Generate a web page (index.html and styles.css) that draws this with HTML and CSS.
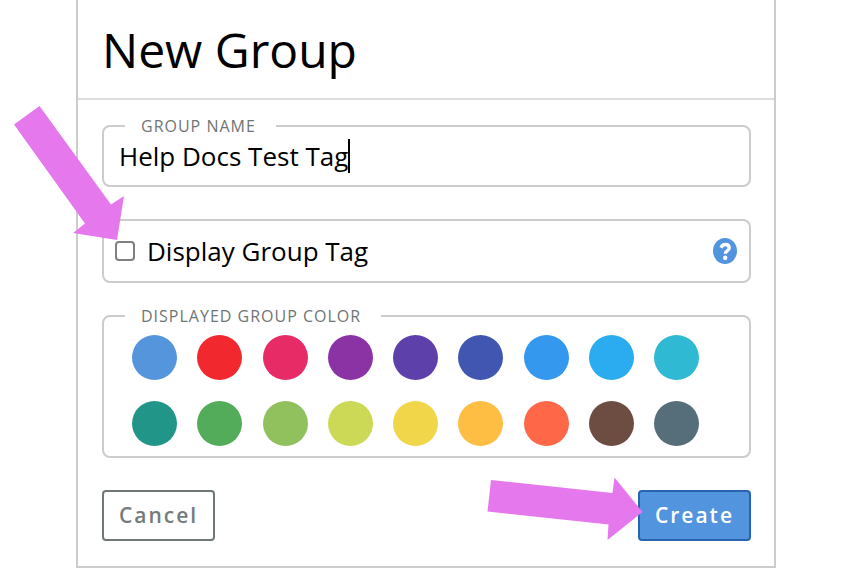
FILE: index.html
```html
<!DOCTYPE html>
<html lang="en">
<head>
<meta charset="utf-8">
<title>New Group</title>
<link rel="stylesheet" href="styles.css">
</head>
<body>
<main class="dialog">
  <header class="dialog-header"><h1>New Group</h1></header>
  <form class="dialog-body">
    <fieldset class="field">
      <legend><label for="group-name">Group Name</label></legend>
      <div class="name-row">
        <input class="name-input" id="group-name" type="text" value="Help Docs Test Tag"><span class="caret"></span>
      </div>
    </fieldset>
    <div class="field tag-row">
      <input class="check" id="display-tag" type="checkbox">
      <label class="tag-label" for="display-tag">Display Group Tag</label>
      <button class="help" type="button" aria-label="Help">
        <svg width="24" height="26" viewBox="0 0 24 26" aria-hidden="true">
          <ellipse cx="12" cy="13" rx="12" ry="13" fill="#5294de"/>
          <path d="M8 9.700Q9.500 6.500 12.200 6.500C14.600 6.500 16.200 7.900 16.200 10C16.200 13.100 12.300 12.800 12.300 15.800" fill="none" stroke="#fff" stroke-width="3.400"/>
          <ellipse cx="12.200" cy="19.800" rx="2.200" ry="2.400" fill="#fff"/>
        </svg>
      </button>
    </div>
    <fieldset class="field">
      <legend>Displayed Group Color</legend>
      <div class="swatches">
        <input class="swatch blue" type="radio" name="color" aria-label="Blue">
        <input class="swatch red" type="radio" name="color" aria-label="Red">
        <input class="swatch pink" type="radio" name="color" aria-label="Pink">
        <input class="swatch purple" type="radio" name="color" aria-label="Purple">
        <input class="swatch violet" type="radio" name="color" aria-label="Violet">
        <input class="swatch indigo" type="radio" name="color" aria-label="Indigo">
        <input class="swatch azure" type="radio" name="color" aria-label="Azure">
        <input class="swatch sky" type="radio" name="color" aria-label="Sky">
        <input class="swatch cyan" type="radio" name="color" aria-label="Cyan">
        <input class="swatch teal" type="radio" name="color" aria-label="Teal">
        <input class="swatch green" type="radio" name="color" aria-label="Green">
        <input class="swatch olive" type="radio" name="color" aria-label="Light green">
        <input class="swatch lime" type="radio" name="color" aria-label="Lime">
        <input class="swatch yellow" type="radio" name="color" aria-label="Yellow">
        <input class="swatch amber" type="radio" name="color" aria-label="Amber">
        <input class="swatch orange" type="radio" name="color" aria-label="Orange">
        <input class="swatch brown" type="radio" name="color" aria-label="Brown">
        <input class="swatch slate" type="radio" name="color" aria-label="Slate">
      </div>
    </fieldset>
    <div class="actions">
      <button class="button cancel" type="button">Cancel</button>
      <button class="button create" type="button">Create</button>
    </div>
  </form>
</main>
<svg class="arrows" width="844" height="574" viewBox="0 0 844 574" aria-hidden="true">
  <path d="M39.500 106L14 124.500L85 223.500L73 233L117 240L124 196L111 204.500Z"/>
  <path d="M491 480L487.500 511.500L608.500 524.500L607.500 540L642.500 512L614.500 477.500L612.500 493Z"/>
</svg>
</body>
</html>
```

FILE: styles.css
```css
* { box-sizing: border-box; }

body {
  margin: 0;
  background: #fff;
  color: #000;
  font-family: "Open Sans", "Noto Sans", sans-serif;
}

.dialog {
  margin: 0 68px 0 76px;
  border: 2px solid #ccc;
  border-top: 0;
}

.dialog-header {
  padding: 18px 24px 16px;
  border-bottom: 2px solid #ddd;
}

h1 {
  margin: 0;
  font-size: 48px;
  font-weight: 400;
  line-height: 64px;
}

.dialog-body { padding: 15px 23px 25px 24px; }

.field {
  min-width: 0;
  margin: 0;
  padding: 0;
  border: 2px solid #ccc;
  border-radius: 8px;
}

legend {
  margin-left: 21px;
  padding: 0 20px 0 16px;
  color: #6f7575;
  font-size: 16px;
  line-height: 22px;
  letter-spacing: 1px;
  text-transform: uppercase;
}

.name-row {
  display: flex;
  align-items: center;
  padding: 1px 15px 11px;
}

.name-input {
  field-sizing: content;
  height: 36px;
  padding: 0;
  border: 0;
  outline: 0;
  background: none;
  color: #000;
  font: 26px/36px "Open Sans", "Noto Sans", sans-serif;
}

.caret {
  width: 2px;
  height: 34px;
  background: #000;
}

.tag-row {
  display: flex;
  align-items: center;
  height: 64px;
  margin: 32px 0 22px;
  padding: 0 12px 0 11px;
}

.check {
  appearance: none;
  width: 20px;
  height: 20px;
  margin: 0;
  border: 2px solid #808080;
  border-radius: 4px;
}

.tag-label {
  margin-left: 12px;
  font-size: 26px;
  line-height: 36px;
}

.help {
  display: flex;
  margin-left: auto;
  padding: 0;
  border: 0;
  background: none;
}

.swatches {
  display: grid;
  grid-template-columns: repeat(9, 45px);
  justify-content: space-between;
  row-gap: 21px;
  padding: 8px 50px 10px 28px;
}

.swatch {
  appearance: none;
  width: 45px;
  height: 45px;
  margin: 0;
  border-radius: 50%;
}

.blue { background: #5595dc; }
.red { background: #f2282f; }
.pink { background: #e72b66; }
.purple { background: #8b33a4; }
.violet { background: #5e40aa; }
.indigo { background: #4156b1; }
.azure { background: #3398ee; }
.sky { background: #2babf0; }
.cyan { background: #2fb9d2; }
.teal { background: #219688; }
.green { background: #53ac59; }
.olive { background: #90c15d; }
.lime { background: #ccd956; }
.yellow { background: #f0d648; }
.amber { background: #fdbe43; }
.orange { background: #fe6849; }
.brown { background: #6d4c42; }
.slate { background: #566e79; }

.actions {
  display: flex;
  justify-content: space-between;
  margin-top: 32px;
}

.button {
  height: 51px;
  padding: 0 15px 2px;
  border: 2px solid #6f7777;
  border-radius: 4px;
  background: #fff;
  color: #757b7b;
  font: 600 21px/30px "Open Sans", "Noto Sans", sans-serif;
  letter-spacing: 2px;
}

.create {
  border-color: #2865b0;
  background: #5294de;
  color: #fff;
}

.arrows {
  position: absolute;
  top: 0;
  left: 0;
  fill: #e678ed;
  pointer-events: none;
}
```
